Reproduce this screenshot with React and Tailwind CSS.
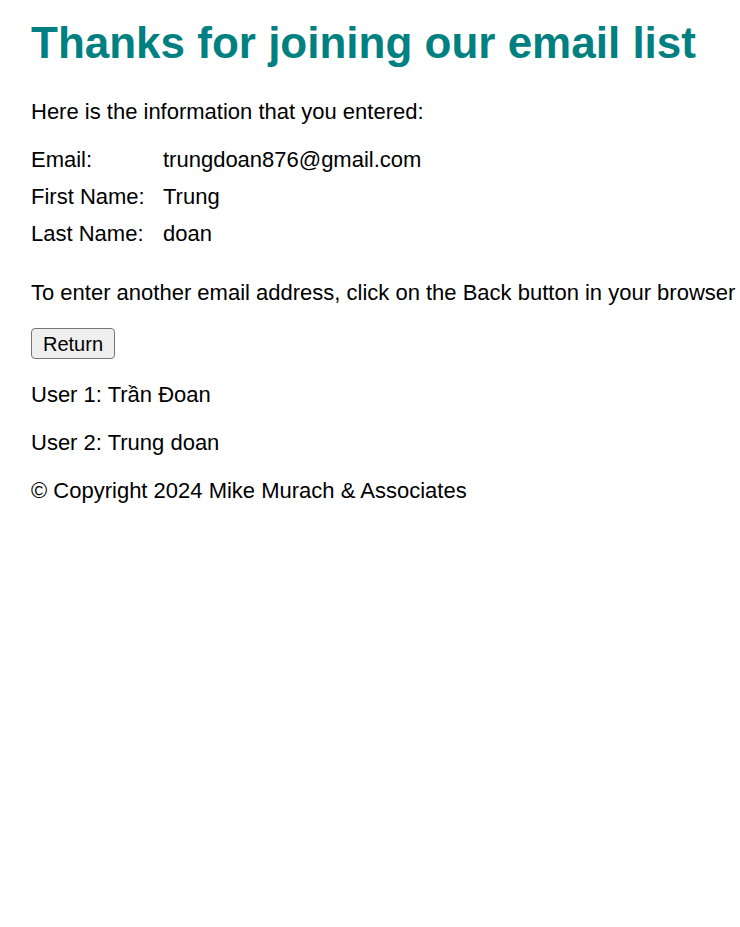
const user = {
  email: 'trungdoan876@gmail.com',
  firstName: 'Trung',
  lastName: 'doan'
}

const users = ['Trần Đoan', 'Trung doan']

const Row = ({ label, value }) => (
  <div className="mb-[12px] flex">
    <span className="w-[132px] shrink-0">{label}</span>
    <span>{value}</span>
  </div>
)

const App = () => {
  return (
    <div className="min-h-screen bg-white pl-[31px] text-[22px] leading-[25.3px] text-black [font-family:'Liberation_Sans',Arial,sans-serif]">
      <div className="h-[18px]" />
      <h1 className="mb-[30px] text-[44px] font-bold leading-[50.6px] text-[#008080]">
        Thanks for joining our email list
      </h1>
      <p className="mb-[23px]">Here is the information that you entered:</p>

      <Row label="Email:" value={user.email} />
      <Row label="First Name:" value={user.firstName} />
      <Row label="Last Name:" value={user.lastName} />

      <p className="mt-[33px] whitespace-nowrap">
        To enter another email address, click on the Back button in your browser
      </p>

      <div className="mt-[23px]">
        <button
          type="button"
          className="flex h-[31px] w-[84px] items-center justify-center rounded-[4px] border border-[#767676] bg-[#efefef] text-[20px] leading-none"
        >
          Return
        </button>
      </div>

      <div className="mt-[23px]">
        {users.map((name, i) => (
          <p key={i} className="mb-[22.7px]">
            User {i + 1}: {name}
          </p>
        ))}
      </div>
      <p>© Copyright 2024 Mike Murach &amp; Associates</p>
    </div>
  )
}

export default App
